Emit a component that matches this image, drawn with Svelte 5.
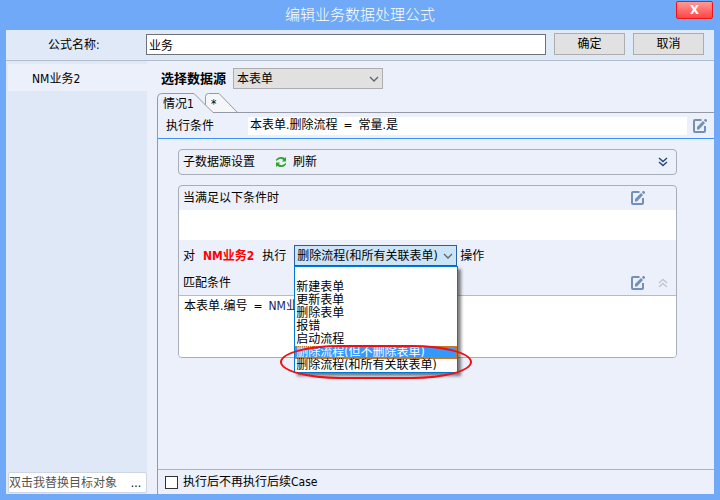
<script lang="ts">
	let formulaName = $state('业务');
	let dataSource = $state('本表单');
	let stopAfter = $state(false);
	let replaceTarget = $state('双击我替换目标对象');
	let action = $state('删除流程(和所有关联表单)');
	let highlighted = $state('删除流程(但不删除表单)');

	const actions = [
		'',
		'新建表单',
		'更新表单',
		'删除表单',
		'报错',
		'启动流程',
		'删除流程(但不删除表单)',
		'删除流程(和所有关联表单)'
	];
</script>

{#snippet editIcon()}
	<svg class="edit-icon" viewBox="0 0 16 16" aria-hidden="true">
		<path d="M9.500 2H3Q2 2 2 3V13Q2 14 3 14H12Q13 14 13 13V8" fill="none" stroke="#7391b8" stroke-width="2" />
		<path d="M5 11.500V9L11 3L13 5L7 11.500Z" fill="#7391b8" />
		<path d="M11.800 2.200L13 1H14L15 2V3L13.800 4.200Z" fill="#7391b8" />
	</svg>
{/snippet}

{#snippet arrow()}
	<svg class="arrow" viewBox="0 0 10 6" aria-hidden="true">
		<path d="M1 1L5 5L9 1" fill="none" stroke="#5f6368" stroke-width="1.300" />
	</svg>
{/snippet}

<div class="window">
	<header class="titlebar">
		<h1>编辑业务数据处理公式</h1>
		<button class="close" aria-label="关闭">X</button>
	</header>

	<div class="client">
		<div class="name-bar">
			<label for="formula-name">公式名称:</label>
			<input id="formula-name" type="text" bind:value={formulaName} />
			<button class="btn">确定</button>
			<button class="btn">取消</button>
		</div>

		<div class="body">
			<aside class="sidebar">
				<button class="target">NM业务2</button>
				<div class="replace">
					<input type="text" aria-label="目标对象" bind:value={replaceTarget} />
					<button aria-label="选择">...</button>
				</div>
			</aside>

			<main class="main">
				<div class="source">
					<label for="source">选择数据源</label>
					<div class="select-box source-box">
						<select id="source" bind:value={dataSource}>
							<option>本表单</option>
						</select>
						{@render arrow()}
					</div>
				</div>

				<div class="tabs" role="tablist">
					<svg class="tab-shapes" viewBox="0 0 90 20" aria-hidden="true">
						<path d="M48.500 10V3.500Q48.500 0.500 51.500 0.500H62L80.500 19.500H48Z" fill="#f5f6f8" stroke="#9499a3" />
						<path d="M0.500 20V4.500Q1 0.500 4.500 0.500H37L56 19.500V20Z" fill="#ecf0fa" />
						<path d="M0.500 20V4.500Q1 0.500 4.500 0.500H37L56 19.500" fill="none" stroke="#9499a3" />
					</svg>
					<button class="tab" role="tab" aria-selected="true">情况1</button>
					<button class="tab add" role="tab" aria-selected="false">*</button>
				</div>

				<div class="panel">
					<div class="condition">
						<span class="condition-label">执行条件</span>
						<div class="expr condition-value">
							<span>本表单.删除流程</span><span>=</span><span>常量.是</span>
						</div>
						<button class="icon-btn" aria-label="编辑执行条件">{@render editIcon()}</button>
					</div>

					<div class="content">
						<section class="group sub-source">
							<span class="sub-title">子数据源设置</span>
							<button class="refresh">
								<svg viewBox="0 0 12 12" aria-hidden="true">
									<path d="M1 5V3.500Q3 0.500 6.500 1Q8.500 1 9.500 2.300L11 1V5.500H7L8.300 4Q6 2 3.500 3.500Z" fill="#2fa32f" />
									<path d="M11 7V8.500Q9 11.500 5.500 11Q3.500 11 2.500 9.700L1 11V6.500H5L3.700 8Q6 10 8.500 8.500Z" fill="#2fa32f" />
								</svg>
								刷新
							</button>
							<button class="fold" aria-label="展开">
								<svg viewBox="0 0 10 10" aria-hidden="true">
									<path d="M1 1L5 4.500L9 1M1 5L5 8.500L9 5" fill="none" stroke="#24447c" stroke-width="1.400" />
								</svg>
							</button>
						</section>

						<section class="group rule">
							<div class="rule-head">
								<span>当满足以下条件时</span>
								<button class="icon-btn" aria-label="编辑条件">{@render editIcon()}</button>
								<span class="fold"></span>
							</div>
							<div class="when"></div>
							<div class="action-row">
								<span>对</span>
								<strong>NM业务2</strong>
								<label for="action">执行</label>
								<div class="combo">
									<div class="select-box open">
										<select id="action" bind:value={action}>
											{#each actions as item}
												<option value={item}>{item}</option>
											{/each}
										</select>
										{@render arrow()}
									</div>
									<ul class="list" role="listbox" aria-label="执行操作">
										{#each actions as item}
											<li role="option" aria-selected={item === highlighted} class:active={item === highlighted}>
												{item}
											</li>
										{/each}
									</ul>
									<div class="mark"></div>
								</div>
								<span>操作</span>
							</div>
							<div class="rule-head match-head">
								<span>匹配条件</span>
								<button class="icon-btn" aria-label="编辑匹配条件">{@render editIcon()}</button>
								<button class="fold" aria-label="收起">
									<svg viewBox="0 0 10 10" aria-hidden="true">
										<path d="M1 5L5 1.500L9 5M1 9L5 5.500L9 9" fill="none" stroke="#c3c6cc" stroke-width="1.400" />
									</svg>
								</button>
							</div>
							<div class="expr match">
								<span>本表单.编号</span><span>=</span><span class="ref">NM业</span>
							</div>
						</section>
					</div>

					<footer>
						<label>
							<input type="checkbox" bind:checked={stopAfter} />
							执行后不再执行后续Case
						</label>
					</footer>
				</div>
			</main>
		</div>
	</div>
</div>

<style>
	:global(body) {
		margin: 0;
	}

	.window,
	.window * {
		box-sizing: border-box;
	}

	.window {
		display: flex;
		flex-direction: column;
		min-height: 100vh;
		padding: 0 6px 6px;
		background: #6fa9f7;
		color: #000;
		font-family: 'DejaVu Sans Condensed', 'Noto Sans CJK SC', sans-serif;
		font-size: 12px;
		line-height: 16px;
	}

	button,
	input,
	select {
		margin: 0;
		padding: 0;
		border: 0;
		background: none;
		color: inherit;
		font: inherit;
	}

	svg {
		display: block;
	}

	.titlebar {
		position: relative;
		height: 30px;
	}

	h1 {
		margin: 0;
		color: #fff;
		font-size: 15px;
		font-weight: 300;
		line-height: 30px;
		text-align: center;
	}

	.close {
		position: absolute;
		top: 1px;
		right: 1px;
		width: 37px;
		height: 18px;
		border: 1px solid #f01414;
		border-radius: 2px;
		background: linear-gradient(#ff9a96, #ff4545);
		color: #fff;
		font-size: 13px;
		font-weight: bold;
		line-height: 16px;
	}

	.client {
		flex: 1;
		display: flex;
		flex-direction: column;
		background: #ecf0fa;
	}

	.name-bar {
		display: flex;
		align-items: center;
		gap: 8px;
		height: 31px;
		padding: 0 10px 2px 42px;
		border-bottom: 1px solid #b3bccb;
		background: #dfe9f7;
	}

	.name-bar label {
		width: 90px;
		padding-top: 2px;
	}

	.name-bar input {
		flex: 1;
		min-width: 0;
		height: 21px;
		padding: 0 2px;
		border: 1px solid #6e7278;
		background: #fff;
	}

	.btn {
		width: 71px;
		height: 22px;
		border: 1px solid #adadad;
		background: #e1e1e1;
	}

	.body {
		flex: 1;
		display: flex;
		gap: 10px;
	}

	.sidebar {
		display: flex;
		flex-direction: column;
		width: 141px;
		padding: 3px 0 1px 2px;
		background: #dfe8f7;
	}

	.target {
		height: 27px;
		padding: 2px 0 0 24px;
		background: #ecf0fa;
		text-align: left;
	}

	.replace {
		display: flex;
		height: 21px;
		margin-top: auto;
		border: 1px solid #cdd5e6;
		border-radius: 2px;
		background: #fff;
	}

	.replace input {
		flex: 1;
		min-width: 0;
		color: #555;
	}

	.replace button {
		width: 20px;
	}

	.main {
		flex: 1;
		display: flex;
		flex-direction: column;
		min-width: 0;
		padding-top: 7px;
	}

	.source {
		display: flex;
		align-items: center;
		gap: 7px;
		height: 21px;
		padding-left: 4px;
	}

	.source label {
		font-size: 13px;
		font-weight: bold;
	}

	.select-box {
		position: relative;
		height: 21px;
		border: 1px solid #adadad;
		background: #e1e1e1;
	}

	.source-box {
		width: 150px;
	}

	.select-box select {
		display: block;
		width: 100%;
		height: 19px;
		padding-left: 3px;
		appearance: none;
		outline: none;
	}

	.arrow {
		position: absolute;
		top: 7px;
		right: 3px;
		width: 10px;
		height: 6px;
		pointer-events: none;
	}

	.tabs {
		position: relative;
		display: flex;
		height: 20px;
		margin-top: 4px;
		border-bottom: 1px solid #9499a3;
	}

	.tab-shapes {
		position: absolute;
		top: 0;
		left: 0;
		width: 90px;
		height: 20px;
	}

	.tab {
		position: relative;
		width: 48px;
		padding: 2px 0 0 6px;
		text-align: left;
	}

	.panel {
		flex: 1;
		display: flex;
		flex-direction: column;
		border-left: 1px solid #9499a3;
	}

	.condition {
		display: flex;
		align-items: center;
		height: 26px;
		padding: 0 6px 0 8px;
		border-bottom: 1px solid #3a92fb;
	}

	.condition-label {
		width: 82px;
	}

	.expr {
		display: flex;
		gap: 6px;
	}

	.condition-value {
		flex: 1;
		height: 18px;
		margin-right: 5px;
		padding-left: 2px;
		background: #fff;
	}

	.icon-btn {
		width: 16px;
		height: 16px;
	}

	.edit-icon {
		width: 16px;
		height: 16px;
	}

	.content {
		flex: 1;
		display: flex;
		flex-direction: column;
		gap: 10px;
		padding: 10px 37px 10px 20px;
	}

	.group {
		border: 1px solid #a9adb8;
		border-radius: 4px;
	}

	.sub-source {
		display: flex;
		align-items: center;
		height: 26px;
		padding: 0 8px 0 4px;
	}

	.sub-title {
		width: 92px;
	}

	.refresh {
		display: flex;
		align-items: center;
		gap: 6px;
	}

	.refresh svg {
		width: 12px;
		height: 12px;
	}

	.fold {
		width: 10px;
		height: 10px;
		margin-left: 12px;
	}

	.sub-source .fold {
		margin-left: auto;
	}

	.rule {
		background: #ecf0fa;
	}

	.rule-head {
		display: flex;
		align-items: center;
		height: 24px;
		padding: 0 8px 0 4px;
	}

	.rule-head .icon-btn {
		margin-left: auto;
	}

	.when {
		height: 30px;
		background: #fff;
	}

	.action-row {
		display: flex;
		align-items: center;
		gap: 8px;
		height: 31px;
		padding-left: 4px;
	}

	.action-row strong {
		color: #f00;
	}

	.combo {
		position: relative;
		width: 163px;
	}

	.combo + span {
		margin-left: -5px;
	}

	.select-box.open {
		border-color: #2a5f9e;
		background: #cce4f7;
	}

	.open select {
		padding-left: 2px;
	}

	.list {
		position: absolute;
		z-index: 1;
		top: 21px;
		left: 0;
		width: 164px;
		margin: 0;
		padding: 1px 0 0;
		border: 1px solid #0078d7;
		background: #fff;
		box-shadow: 3px 3px 3px rgba(0, 0, 0, 0.5);
		list-style: none;
	}

	.list li {
		height: 13px;
		padding-left: 1px;
		line-height: 13px;
		white-space: nowrap;
	}

	.list .active {
		outline: 1px dotted #c87a2a;
		outline-offset: -1px;
		background: #3399ff;
		color: #fff;
	}

	.mark {
		position: absolute;
		z-index: 2;
		top: 100px;
		left: -14px;
		width: 192px;
		height: 34px;
		border: 2px solid #f00f14;
		border-radius: 60px / 50%;
		pointer-events: none;
	}

	.match-head {
		height: 25px;
		border-bottom: 1px solid #b3bccb;
	}

	.match {
		height: 61px;
		padding: 2px 5px;
		border-radius: 0 0 3px 3px;
		background: #fff;
	}

	.ref {
		color: #16245c;
	}

	footer {
		display: flex;
		align-items: center;
		height: 25px;
		padding-left: 7px;
		border-top: 1px solid #9bb8d3;
	}

	footer label {
		display: flex;
		align-items: center;
		gap: 5px;
	}

	footer input {
		width: 13px;
		height: 13px;
		border: 1px solid #333;
		background: #fff;
		appearance: none;
	}

	footer input:checked {
		background: #0078d7;
	}
</style>
